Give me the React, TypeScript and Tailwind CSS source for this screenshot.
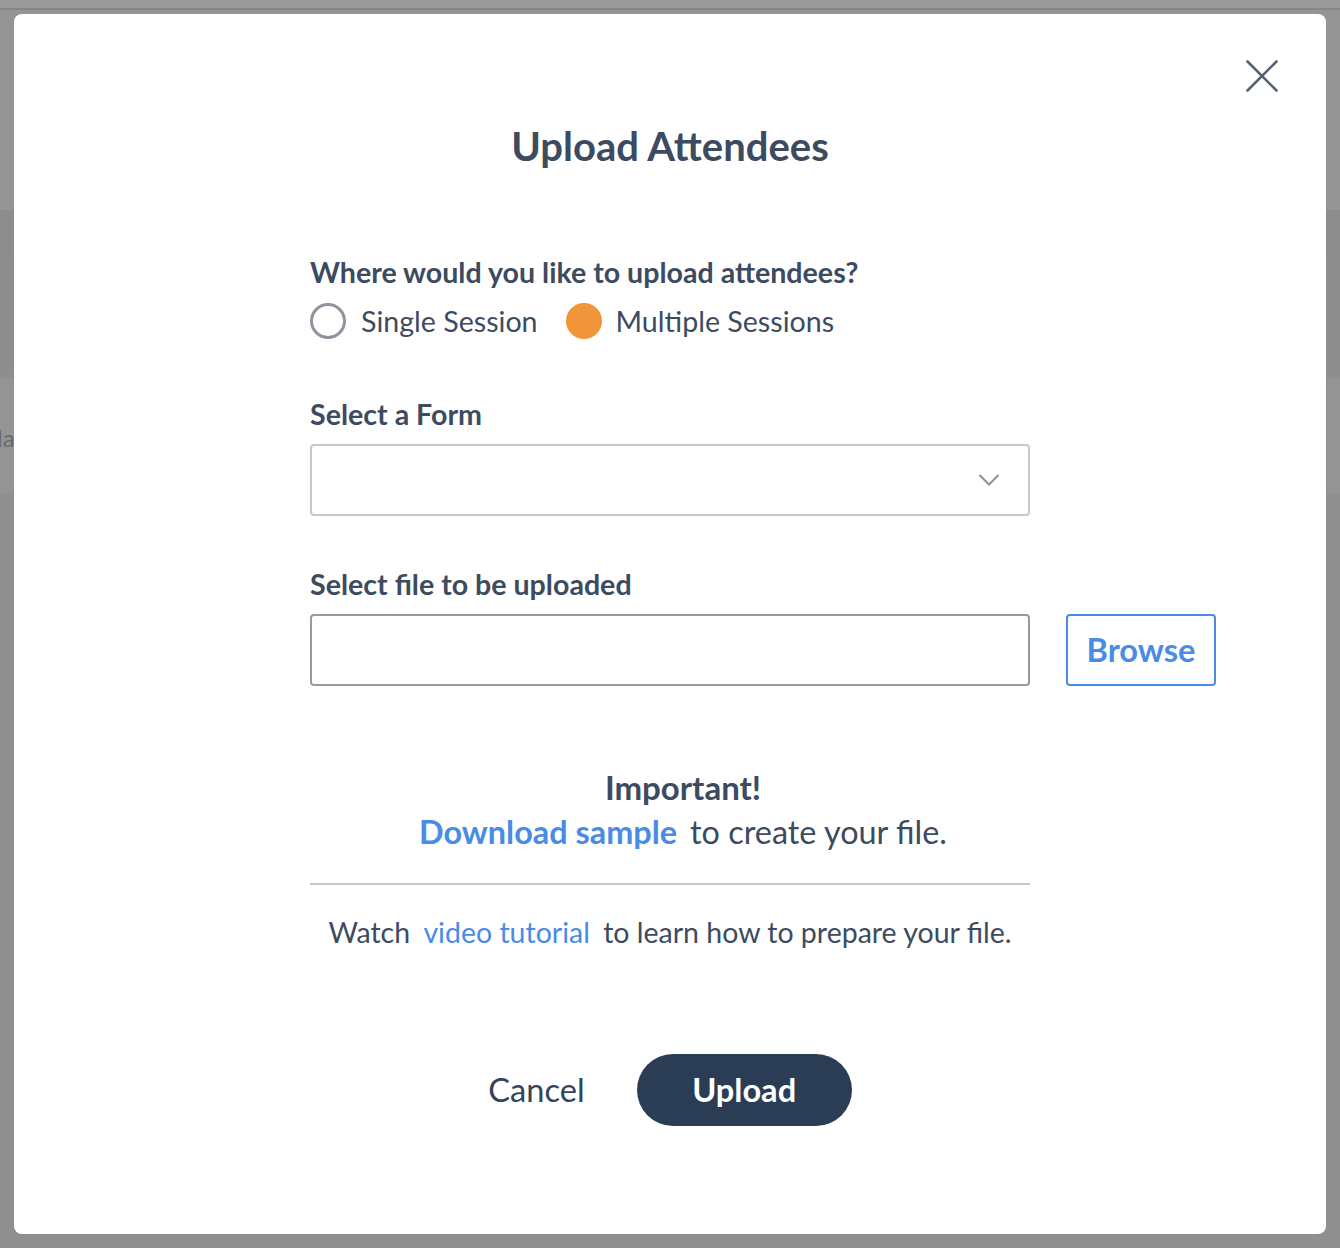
import { useState } from 'react'

const font = { fontFamily: 'Lato, "Open Sans", sans-serif' }

function CloseIcon() {
  return (
    <svg width="32" height="32" viewBox="0 0 32 32" fill="none">
      <path d="M1.5 1.5 L30.5 30.5 M30.5 1.5 L1.5 30.5" stroke="#566172" strokeWidth="2.6" strokeLinecap="round" />
    </svg>
  )
}

function Chevron() {
  return (
    <svg width="22" height="14" viewBox="0 0 22 14" fill="none">
      <path d="M1.5 2 L11 11.5 L20.5 2" stroke="#8c939b" strokeWidth="2" />
    </svg>
  )
}

function Radio({ checked }: { checked: boolean }) {
  return (
    <span
      className={
        checked
          ? 'h-[36px] w-[36px] shrink-0 rounded-full bg-[#f0953a]'
          : 'h-[36px] w-[36px] shrink-0 rounded-full border-[3px] border-[#8d949c]'
      }
    />
  )
}

export default function App() {
  const [mode, setMode] = useState<'single' | 'multiple'>('multiple')

  return (
    <div
      style={font}
      className="relative h-[1248px] w-full overflow-hidden p-[14px] bg-[linear-gradient(to_bottom,#9b9b9b_0,#9b9b9b_8px,#878787_8px,#878787_10px,#959595_10px,#959595_210px,#8d8d8d_210px,#8e8e8e_378px,#949494_378px,#949494_493px,#8f8f8f_493px)]"
    >
      {/* page behind the overlay, peeking out on the left */}
      <span className="absolute left-[-3px] top-[420px] text-[24px] text-[#666a6e]">la</span>

      <div className="relative flex h-[1220px] w-full flex-col items-center rounded-[8px] bg-white text-[#3d4b60]">
        <button className="absolute right-[48px] top-[46px]" aria-label="Close">
          <CloseIcon />
        </button>

        <h1 className="mt-[108px] text-[40px] font-bold leading-[48px]">Upload Attendees</h1>

        <div className="mt-[84px] w-[720px]">
          <div className="text-[28.6px] font-bold leading-[36px]">Where would you like to upload attendees?</div>
          <div className="mt-[13px] flex items-center">
            <button onClick={() => setMode('single')} className="flex items-center">
              <Radio checked={mode === 'single'} />
              <span className="ml-[15px] text-[28.6px] leading-[36px]">Single Session</span>
            </button>
            <button onClick={() => setMode('multiple')} className="ml-[28px] flex items-center">
              <Radio checked={mode === 'multiple'} />
              <span className="ml-[14px] text-[28.6px] leading-[36px]">Multiple Sessions</span>
            </button>
          </div>

          <div className="mt-[57px] text-[28.6px] font-bold leading-[36px]">Select a Form</div>
          <div className="mt-[12px] flex h-[72px] w-[720px] items-center justify-end rounded-[4px] border-2 border-[#c5c9ce] pr-[28px]">
            <Chevron />
          </div>

          <div className="mt-[50px] text-[28.6px] font-bold leading-[36px]">Select file to be uploaded</div>
          <div className="mr-[-186px] mt-[12px] flex gap-[36px]">
            <div className="h-[72px] w-[720px] rounded-[4px] border-2 border-[#959ba2]" />
            <button className="h-[72px] w-[150px] rounded-[4px] border-2 border-[#4a8be6] text-[32.6px] font-bold text-[#4a8be6]">
              Browse
            </button>
          </div>

          <div className="mt-[81px] pl-[26px] text-center">
            <div className="text-[33px] font-bold leading-[40px]">Important!</div>
            <div className="mt-[5px] text-[32.4px] leading-[40px]">
              <a className="font-bold text-[#4a8be6]">Download sample</a>
              <span className="ml-[13px]">to create your file.</span>
            </div>
          </div>

          <div className="mt-[31px] h-[2px] w-[720px] bg-[#c5c9ce]" />

          <div className="mt-[29px] text-center text-[28.5px] leading-[36px]">
            Watch <a className="mx-[6px] text-[#4a8be6]">video tutorial</a> to learn how to prepare your file.
          </div>
        </div>

        <div className="mt-[104px] flex items-center gap-[52px]">
          <button className="text-[32.6px] text-[#34445a]">Cancel</button>
          <button className="h-[72px] w-[215px] rounded-full bg-[#2b3c55] text-[32.6px] font-bold text-white">
            Upload
          </button>
        </div>
      </div>
    </div>
  )
}
